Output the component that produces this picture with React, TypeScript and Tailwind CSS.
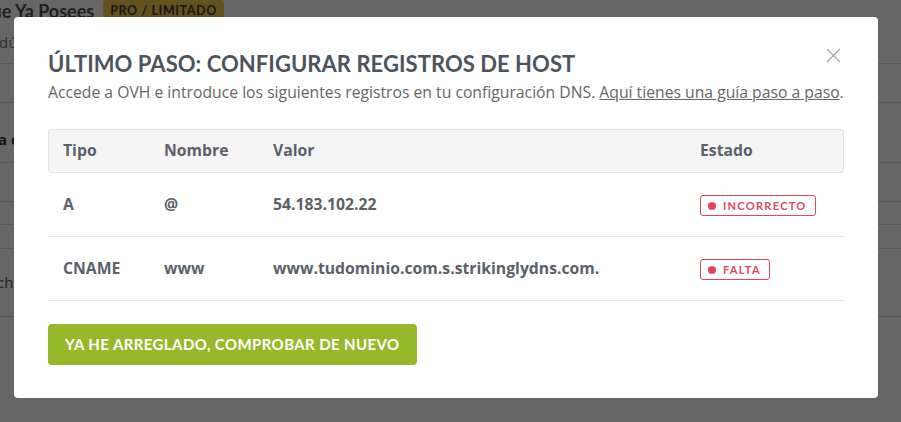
import React from "react";

const geo = { fontFamily: "Lato, 'Open Sans', sans-serif" };
const os = { fontFamily: "'Open Sans', 'Noto Sans', sans-serif" };

function Badge({ label }: { label: string }) {
  return (
    <span
      className="inline-flex items-center gap-[7px] h-[21px] pl-[7px] pr-[8px] border border-[#e0485a] rounded-[3px] text-[#e0485a] text-[11px] font-bold tracking-[1.3px] leading-none"
      style={geo}
    >
      <span className="w-[8px] h-[8px] rounded-full bg-[#e0485a]" />
      {label}
    </span>
  );
}

function Row({ tipo, nombre, valor, estado }: { tipo: string; nombre: string; valor: string; estado: string }) {
  return (
    <div className="flex items-center h-[64px] border-b border-[#e5e5e5] text-[15.75px] font-bold text-[#5b6169]" style={os}>
      <div className="w-[116px] pl-[15px]">{tipo}</div>
      <div className="w-[109px]">{nombre}</div>
      <div className="w-[427px]">{valor}</div>
      <div className="flex-1">
        <Badge label={estado} />
      </div>
    </div>
  );
}

export default function App() {
  return (
    <div className="relative w-[901px] h-[422px] overflow-hidden bg-white">
      {/* underlying page */}
      <div className="w-[901px]" style={os}>
        <div className="flex items-center gap-[9px] h-[22px] ml-[-187px]">
          <span className="text-[18px] font-bold text-[#4b5159] whitespace-nowrap" style={geo}>Conecta un Dominio que Ya Posees</span>
          <span className="bg-[#f6cd4a] text-[#3a3a3a] text-[12.5px] font-bold tracking-[0.6px] px-[7px] h-[22px] flex items-center rounded-[3px] whitespace-nowrap" style={geo}>
            PRO / LIMITADO
          </span>
        </div>
        <div className="h-[41px] flex items-center text-[15px] text-[#777] ml-[-1px]">dúcelo aquí</div>
        <div className="border-t border-[#ddd] h-[39px]" />
        <div className="border-t border-[#ddd] h-[60px] flex items-end pb-[12px] text-[15px] font-bold text-[#333] ml-[-2px]">
          a conectar
        </div>
        <div className="border-t border-[#ddd] h-[39px]" />
        <div className="border-t border-[#ddd] h-[23px]" />
        <div className="border-t border-[#ddd] h-[24px]" />
        <div className="border-t border-[#ddd] h-[68px] flex items-center text-[15px] text-[#555] ml-[-3px]">
          chttp
        </div>
        <div className="border-t border-[#ddd]" />
      </div>

      {/* overlay */}
      <div className="absolute inset-0 bg-black/60 flex items-start pt-[17px] pl-[14px]">
        <div className="relative w-[864px] h-[381px] bg-white rounded-[4px] px-[34px] pt-[33px]">
          <svg className="absolute right-[37px] top-[31px]" width="15" height="15" viewBox="0 0 15 15">
            <path d="M1 1 L14 14 M14 1 L1 14" stroke="#a8a8a8" strokeWidth="1.3" />
          </svg>
          <h1 className="text-[22px] leading-[28px] font-bold text-[#4d545c] tracking-[0.05px]" style={geo}>
            ÚLTIMO PASO: CONFIGURAR REGISTROS DE HOST
          </h1>
          <p className="mt-[3px] text-[15.72px] leading-[22px] text-[#666] whitespace-nowrap" style={os}>
            Accede a OVH e introduce los siguientes registros en tu configuración DNS.{" "}
            <span className="underline">Aquí tienes una guía paso a paso</span>.
          </p>
          <div className="mt-[26px]">
            <div className="flex items-center h-[44px] bg-[#f5f5f5] border border-[#e3e3e3] rounded-[3px] text-[15.75px] font-bold text-[#5b6169]" style={os}>
              <div className="w-[115px] pl-[14px]">Tipo</div>
              <div className="w-[109px]">Nombre</div>
              <div className="w-[427px]">Valor</div>
              <div className="flex-1">Estado</div>
            </div>
            <Row tipo="A" nombre="@" valor="54.183.102.22" estado="INCORRECTO" />
            <Row tipo="CNAME" nombre="www" valor="www.tudominio.com.s.strikinglydns.com." estado="FALTA" />
          </div>
          <button
            className="mt-[23px] h-[41px] px-[17px] bg-[#98b82b] rounded-[4px] text-white text-[15px] font-bold tracking-[0.4px]"
            style={geo}
          >
            YA HE ARREGLADO, COMPROBAR DE NUEVO
          </button>
        </div>
      </div>
    </div>
  );
}
